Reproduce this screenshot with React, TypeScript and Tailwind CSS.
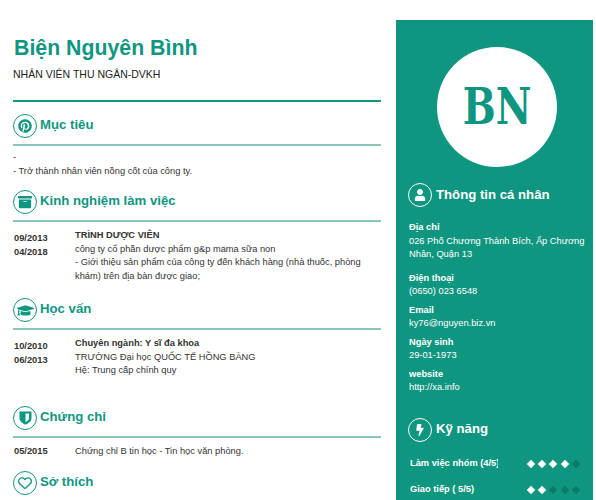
import React from "react";
import { FaPinterest, FaArchive, FaGraduationCap, FaBolt, FaUser } from "react-icons/fa";
import { FaRegHeart } from "react-icons/fa6";

const Section = ({ icon, title, mt }: { icon: React.ReactNode; title: string; mt: string }) => (
  <div className={mt}>
    <div className="flex items-center gap-[3px] h-[24px]">
      <div className="w-[24px] h-[24px] rounded-full border border-[#0f9680] flex items-center justify-center text-[#0f9680] shrink-0">
        {icon}
      </div>
      <div className="text-[13.2px] font-bold text-[#0f9680] leading-[24px] -mt-[2px]">{title}</div>
    </div>
    <div className="h-[2px] bg-[#8cc5ba] mt-[6px]" />
  </div>
);

const Dates = ({ items }: { items: string[] }) => (
  <div className="w-[62px] pl-[1px] shrink-0 font-bold text-[#333] pt-[3px]">
    {items.map((d) => (
      <div key={d}>{d}</div>
    ))}
  </div>
);

const Info = ({ label, children, mt }: { label: string; children: React.ReactNode; mt: string }) => (
  <div className={mt}>
    <div className="font-bold">{label}</div>
    <div>{children}</div>
  </div>
);

const Diamonds = ({ on }: { on: number }) => (
  <div className="flex gap-[5.3px] items-center">
    {[0, 1, 2, 3, 4].map((i) => (
      <div
        key={i}
        className={i < on ? "w-[6px] h-[6px] rotate-45 bg-white" : "w-[6px] h-[6px] rotate-45 bg-[#0c7a68]"}
      />
    ))}
  </div>
);

const Shield = () => (
  <svg width="13" height="14" viewBox="0 0 13 14" fill="currentColor">
    <path d="M0.5 0.5h12v6.5c0 3.2-2.8 5.5-6 6.6-3.2-1.1-6-3.4-6-6.6z" />
    <path d="M6.5 2.5h3.5v4.5c0 1.8-1.6 3.2-3.5 4z" fill="#fff" />
  </svg>
);

export default function App() {
  return (
    <div className="w-[596px] h-[500px] overflow-hidden bg-white flex font-['Liberation_Sans',Arial,sans-serif]">
      <main className="w-[368px] ml-[13px] shrink-0 text-[9.3px] leading-[13.5px] text-[#333]">
        <h1 className="mt-[35px] text-[21.3px] leading-[26px] font-bold text-[#0f9680] pl-[1px]">Biện Nguyên Bình</h1>
        <div className="mt-[6px] text-[10.5px] leading-[14px] text-[#222]">NHÂN VIÊN THU NGÂN-DVKH</div>
        <div className="h-[2px] bg-[#0f9680] mt-[19px]" />

        <Section mt="mt-[12px]" title="Mục tiêu" icon={<FaPinterest size={14} />} />
        <div className="mt-[5px]">
          <div>-</div>
          <div>- Trở thành nhân viên nồng cốt của công ty.</div>
        </div>

        <Section mt="mt-[12px]" title="Kinh nghiệm làm việc" icon={<FaArchive size={14} />} />
        <div className="flex mt-[7px]">
          <Dates items={["09/2013", "04/2018"]} />
          <div>
            <div className="font-bold text-[#333]">TRÌNH DƯỢC VIÊN</div>
            <div>công ty cổ phần dược phẩm g&amp;p mama sữa non</div>
            <div>- Giới thiệu sản phẩm của công ty đến khách hàng (nhà thuốc, phòng khám) trên địa bàn được giao;</div>
          </div>
        </div>

        <Section mt="mt-[15px]" title="Học vấn" icon={<FaGraduationCap size={17} />} />
        <div className="flex mt-[7px]">
          <Dates items={["10/2010", "06/2013"]} />
          <div>
            <div className="font-bold text-[#333]">Chuyên ngành: Y sĩ đa khoa</div>
            <div>TRƯỜNG Đại học QUỐC TẾ HỒNG BÀNG</div>
            <div>Hệ: Trung cấp chính quy</div>
          </div>
        </div>

        <Section mt="mt-[28px]" title="Chứng chỉ" icon={<Shield />} />
        <div className="flex mt-[7px]">
          <div className="w-[62px] pl-[1px] shrink-0 font-bold text-[#333]">05/2015</div>
          <div>Chứng chỉ B tin học - Tin học văn phòng.</div>
        </div>

        <Section mt="mt-[13px]" title="Sở thích" icon={<FaRegHeart size={14} />} />
      </main>

      <aside className="ml-[15px] mt-[20px] w-[197px] h-[480px] shrink-0 bg-[#0f9680] text-white text-[9.3px] leading-[13.5px] pl-[13px] pr-[8px]">
        <div className="w-[120px] h-[120px] rounded-full bg-white ml-[28px] mt-[27px] flex items-center justify-center">
          <span className="font-['DejaVu_Serif',serif] font-bold text-[#0f9680] text-[50px] leading-none scale-x-[0.78]">BN</span>
        </div>

        <div className="flex items-center gap-[4px] mt-[16px] -ml-[1px]">
          <div className="w-[24px] h-[24px] rounded-full border border-white flex items-center justify-center shrink-0">
            <FaUser size={12} />
          </div>
          <div className="text-[13.2px] font-bold leading-[24px] -mt-[1px]">Thông tin cá nhân</div>
        </div>

        <Info mt="mt-[14px]" label="Địa chỉ">
          026 Phố Chương Thành Bích, Ấp Chương Nhân, Quận 13
        </Info>
        <Info mt="mt-[10px]" label="Điện thoại">(0650) 023 6548</Info>
        <Info mt="mt-[5px]" label="Email">ky76@nguyen.biz.vn</Info>
        <Info mt="mt-[5px]" label="Ngày sinh">29-01-1973</Info>
        <Info mt="mt-[5px]" label="website">http://xa.info</Info>

        <div className="flex items-center gap-[4px] mt-[23px] -ml-[1px]">
          <div className="w-[24px] h-[24px] rounded-full border border-white flex items-center justify-center shrink-0">
            <FaBolt size={12} />
          </div>
          <div className="text-[13.2px] font-bold leading-[24px] -mt-[1px]">Kỹ năng</div>
        </div>

        <div className="mt-[15px] mr-[6px] flex items-center justify-between font-bold h-[14px]">
          <div className="w-[88px] ml-[1px] overflow-hidden whitespace-nowrap">Làm việc nhóm (4/5)</div>
          <Diamonds on={4} />
        </div>
        <div className="mt-[12px] mr-[6px] flex items-center justify-between font-bold h-[14px]">
          <div className="ml-[1px]">Giao tiếp ( 5/5)</div>
          <Diamonds on={2} />
        </div>
      </aside>
    </div>
  );
}
